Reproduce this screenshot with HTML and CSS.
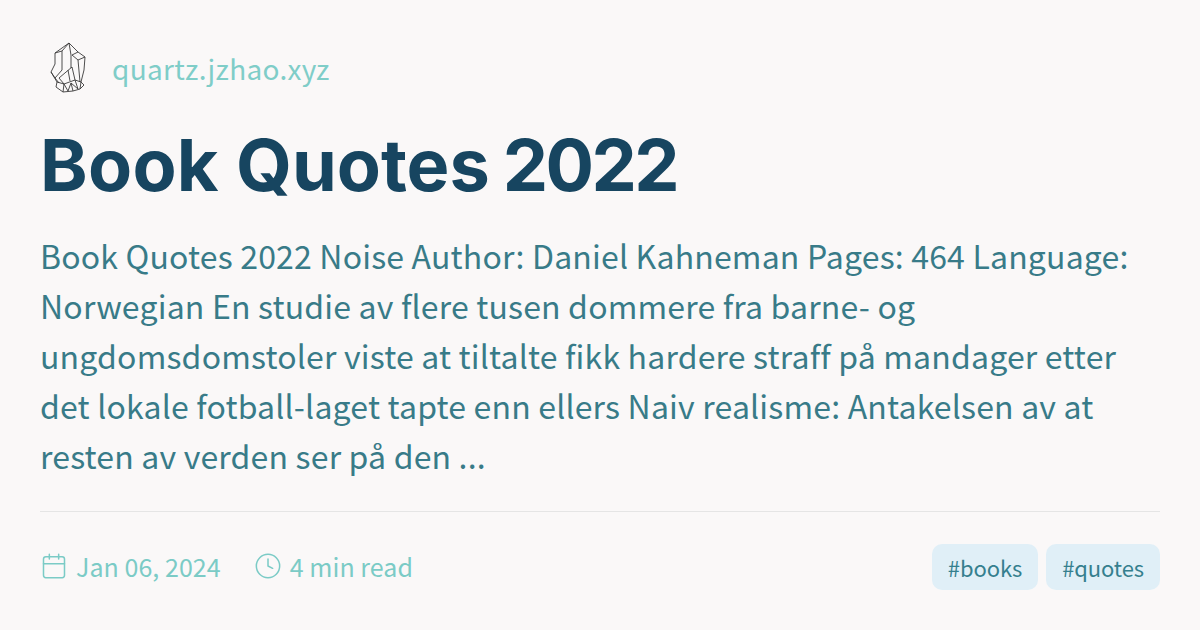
FILE: index.html
```html
<!DOCTYPE html>
<html lang="en">
<head>
<meta charset="utf-8">
<title>Book Quotes 2022</title>
<link rel="stylesheet" href="styles.css">
</head>
<body>
<main class="card">
  <header class="brand">
    <svg class="logo" width="60" height="60" viewBox="0 0 60 60" fill="none" stroke="#3a3a3a" stroke-width="0.9" stroke-linejoin="round">
      <path d="M15 13 L29 3 L38 12 L45 17 L44 30 L41 42 L44 45 L40 49 L33 51 L23 52 L16 47 L17 42 L11 32 L15 24 Z"/>
      <path d="M29 3 L22 11 L22 30 M15 13 L22 11 M29 3 L31 15 L31 28 M32 15 L38 12 M38 20 L45 17 M32 15 L38 20 L40 42"/>
      <path d="M11 32 L15 38 L22 30 M15 38 L19 43 M19 38 L32 27 L35 40 L24 44 L19 38 M28 30 L30 41"/>
      <path d="M17 42 L24 44 L23 52 M24 44 L28 51 L31 43 L33 51 M35 40 L38 49 M41 42 L35 40 M31 43 L38 49 M41 42 L40 49"/>
    </svg>
    <span class="site">quartz.jzhao.xyz</span>
  </header>
  <h1 class="title"><span class="word-book">Book</span> <span class="word-quotes">Quotes</span> <span class="word-year">2022</span></h1>
  <p class="desc">Book Quotes 2022 Noise Author: Daniel Kahneman Pages: 464 Language: Norwegian En studie av flere tusen dommere fra barne- og ungdomsdomstoler viste at tiltalte fikk hardere straff på mandager etter det lokale fotball-laget tapte enn ellers Naiv realisme: Antakelsen av at resten av verden ser på den ...</p>
  <footer class="meta">
    <div class="facts">
      <span class="fact">
        <svg width="28" height="28" viewBox="0 0 24 24" fill="none" stroke="currentColor" stroke-width="1.3" stroke-linecap="round" stroke-linejoin="round"><rect x="3" y="4" width="18" height="18" rx="2"/><path d="M16 2v4M8 2v4M3 10h18"/></svg>
        Jan 06, 2024
      </span>
      <span class="fact">
        <svg width="28" height="28" viewBox="0 0 24 24" fill="none" stroke="currentColor" stroke-width="1.3" stroke-linecap="round" stroke-linejoin="round"><circle cx="12" cy="12" r="10"/><path d="M12 6v6l4 2"/></svg>
        4 min read
      </span>
    </div>
    <div class="tags">
      <span class="tag">#books</span>
      <span class="tag">#quotes</span>
    </div>
  </footer>
</main>
</body>
</html>
```
FILE: styles.css
```css
* { box-sizing: border-box; }
html, body { margin: 0; padding: 0; }
body {
  width: 1200px;
  height: 630px;
  background: #faf8f8;
  font-family: "Noto Sans CJK JP", "Noto Sans", sans-serif;
  overflow: hidden;
}
.card {
  height: 630px;
  display: flex;
  flex-direction: column;
  padding: 40px;
}
.brand {
  display: flex;
  align-items: center;
  gap: 12px;
  height: 60px;
}
.logo { flex: none; }
.site { font-size: 28px; line-height: 56px; padding-bottom: 4px; color: #7fcdc8; letter-spacing: 0.3px; }
.title {
  margin: 20px 0 0;
  font-family: Inter, sans-serif;
  font-weight: 700;
  font-size: 72px;
  line-height: 90px;
  color: #174560;
}
.word-book { letter-spacing: 0.3px; }
.word-quotes { letter-spacing: 0; margin-right: -4px; }
.word-year { letter-spacing: -2.6px; }
.desc {
  margin: 20px 0 0;
  font-size: 32px;
  line-height: 50px;
  color: #387b88;
  letter-spacing: 0.18px;
}
.meta {
  margin-top: auto;
  border-top: 1px solid #e5e5e5;
  padding-top: 32px;
  display: flex;
  justify-content: space-between;
  align-items: center;
}
.facts { display: flex; gap: 33px; margin-bottom: 2px; font-size: 25px; color: #7bcbc6; letter-spacing: 0.05px; }
.fact { display: flex; align-items: center; gap: 8px; }
.tags { display: flex; gap: 8px; }
.tag {
  background: #e0eff7;
  border-radius: 10px;
  padding: 0 16px;
  height: 46px;
  line-height: 46px;
  font-size: 22px;
  color: #357f8e;
  letter-spacing: -0.1px;
}
```
